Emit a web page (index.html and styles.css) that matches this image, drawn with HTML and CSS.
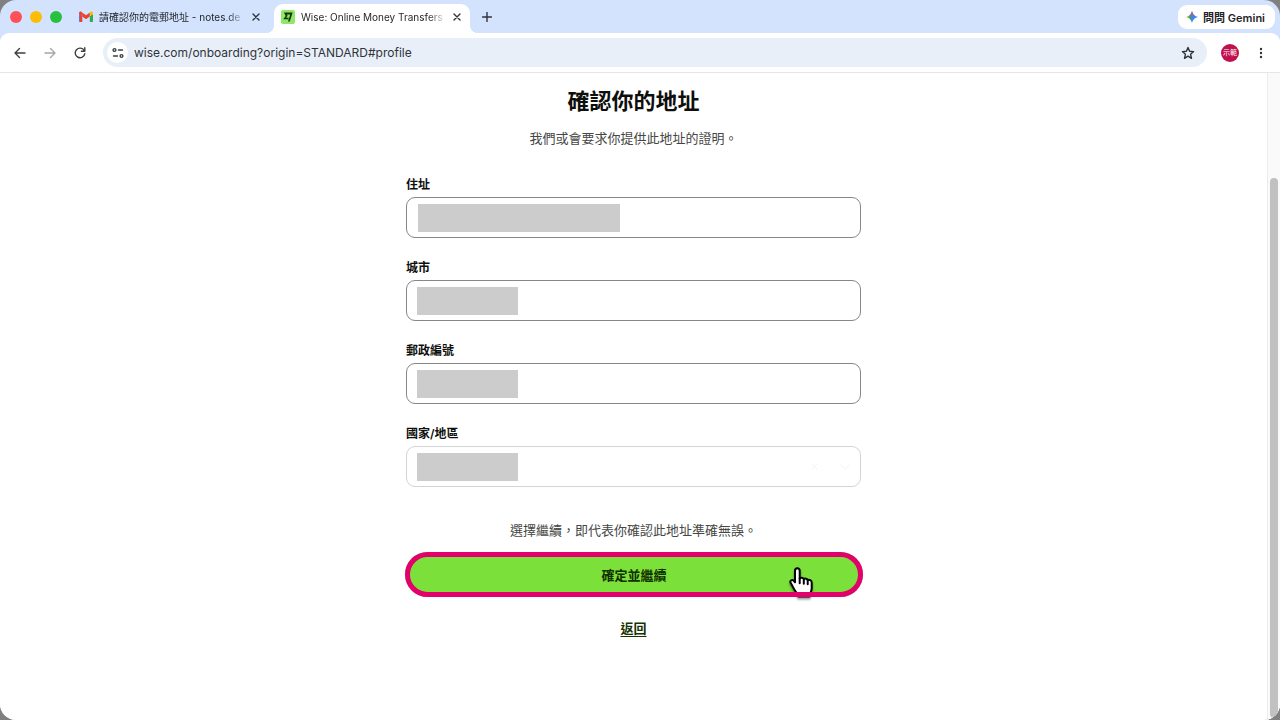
FILE: index.html
```html
<!DOCTYPE html>
<html lang="zh-Hant">
<head>
  <meta charset="UTF-8">
  <title>Wise: Online Money Transfers</title>
  <link rel="stylesheet" href="styles.css">
</head>
<body>

  <div class="window">

    <!-- Tab strip -->
    <div class="tab-strip">
      <div class="lights">
        <span class="light red"></span>
        <span class="light yellow"></span>
        <span class="light green"></span>
      </div>

      <div class="tab">
        <svg class="favicon" viewBox="0 0 14 14">
          <path fill="#4285f4" d="M0 4v7.2c0 .5.400.8.800.8h2.400V6.200z"/>
          <path fill="#34a853" d="M10.800 12h2.400c.500 0 .800-.300.800-.800V4l-3.200 2.200z"/>
          <path fill="#fbbc04" d="M10.800 3v3.300L14 4V3c0-1.400-1.500-2-2.400-1.200z"/>
          <path fill="#ea4335" d="M3.200 6.400V2.400L7 5.300l3.800-2.900v4L7 9.300z"/>
          <path fill="#ea4335" d="M0 3v1l3.200 2.400V12H.8L.8 5z"/>
          <path fill="#ea4335" d="M0 3v1l3.200 2.400v-4l-.8-.6C1.400 1 0 1.700 0 3z"/>
        </svg>
        <span class="tab-title">請確認你的電郵地址 - notes.de</span>
        <button class="icon-btn" aria-label="Close tab">
          <svg width="8" height="8" viewBox="0 0 8 8"><path d="M1 1l6 6M7 1L1 7"/></svg>
        </button>
      </div>

      <div class="tab active">
        <svg class="favicon" viewBox="0 0 14 14">
          <rect width="14" height="14" rx="2" fill="#8ee66b"/>
          <path fill="#163300" d="M3 2.600h8.600L8.800 11.600H7l2.200-7.200H5.900l.7 1.400-1.500 1.900h2.700l-.5 1.500H2.300l2.400-3.200z"/>
        </svg>
        <span class="tab-title">Wise: Online Money Transfers</span>
        <button class="icon-btn" aria-label="Close tab">
          <svg width="8" height="8" viewBox="0 0 8 8"><path d="M1 1l6 6M7 1L1 7"/></svg>
        </button>
      </div>

      <button class="icon-btn new-tab" aria-label="New tab">
        <svg width="10" height="10" viewBox="0 0 10 10"><path d="M5 .5v9M.5 5h9"/></svg>
      </button>

      <button class="gemini">
        <svg width="12" height="12" viewBox="0 0 12 12">
          <defs>
            <linearGradient id="spark" x1="0" y1="0.600" x2="1" y2="0.400">
              <stop offset="0" stop-color="#f5b400"/>
              <stop offset="0.350" stop-color="#34a06a"/>
              <stop offset="0.500" stop-color="#3f86f0"/>
              <stop offset="1" stop-color="#3c7df0"/>
            </linearGradient>
            <linearGradient id="sparkTop" x1="0" y1="0" x2="0" y2="1">
              <stop offset="0" stop-color="#ea4335"/>
              <stop offset="0.450" stop-color="#ea4335" stop-opacity="0"/>
            </linearGradient>
          </defs>
          <path fill="url(#spark)" d="M6 0c.8 3.200 2.800 5.200 6 6-3.200.8-5.200 2.800-6 6-.8-3.200-2.800-5.200-6-6 3.200-.8 5.200-2.800 6-6z"/>
          <path fill="url(#sparkTop)" d="M6 0c.8 3.200 2.800 5.200 6 6-3.200.8-5.200 2.800-6 6-.8-3.200-2.800-5.200-6-6 3.200-.8 5.200-2.800 6-6z"/>
        </svg>
        問問 Gemini
      </button>
    </div>

    <!-- Toolbar -->
    <div class="toolbar">
      <button class="nav-btn" aria-label="Back">
        <svg width="12" height="12" viewBox="0 0 12 12"><path d="M11 6H1M5.500 1.500L1 6l4.500 4.500"/></svg>
      </button>
      <button class="nav-btn faded" aria-label="Forward">
        <svg width="12" height="12" viewBox="0 0 12 12"><path d="M1 6H11M6.500 1.500L11 6l-4.500 4.500"/></svg>
      </button>
      <button class="nav-btn" aria-label="Reload">
        <svg width="12" height="12" viewBox="0 0 12 12"><path d="M10.200 3.500A4.800 4.800 0 1 0 10.800 6.600M10.800.8v3.400H7.400"/></svg>
      </button>

      <div class="address-bar">
        <span class="site-info">
          <svg width="12" height="12" viewBox="0 0 12 12">
            <circle cx="2.500" cy="3" r="1.400"/><path d="M6.500 3h4M1.500 9h4"/><circle cx="9.500" cy="9" r="1.400"/>
          </svg>
        </span>
        <input class="url" type="text" aria-label="Address" value="wise.com/onboarding?origin=STANDARD#profile">
        <button class="icon-btn" aria-label="Bookmark">
          <svg width="14" height="14" viewBox="0 0 14 14"><path d="M7 1.500l1.600 3.700 4 .4-3 2.700.9 4L7 10.200l-3.500 2.100.9-4-3-2.700 4-.4z"/></svg>
        </button>
      </div>

      <span class="avatar">示範</span>
      <button class="icon-btn menu" aria-label="Menu">
        <svg width="4" height="12" viewBox="0 0 4 12"><circle cx="2" cy="2" r="1.200"/><circle cx="2" cy="6" r="1.200"/><circle cx="2" cy="10" r="1.200"/></svg>
      </button>
    </div>

    <!-- Page -->
    <div class="viewport">
      <main class="page">
        <form class="address-form">
          <h1>確認你的地址</h1>
          <p class="intro">我們或會要求你提供此地址的證明。</p>

          <div class="field">
            <label for="address">住址</label>
            <div class="control">
              <span class="mask wide"></span>
              <input id="address" type="text">
            </div>
          </div>

          <div class="field">
            <label for="city">城市</label>
            <div class="control">
              <span class="mask"></span>
              <input id="city" type="text">
            </div>
          </div>

          <div class="field">
            <label for="postcode">郵政編號</label>
            <div class="control">
              <span class="mask"></span>
              <input id="postcode" type="text">
            </div>
          </div>

          <div class="field">
            <label for="country">國家/地區</label>
            <div class="control disabled">
              <span class="mask"></span>
              <select id="country" disabled></select>
              <svg width="40" height="8" viewBox="0 0 40 8"><path d="M2 1l5 5M7 1L2 6M31 2l4 4 4-4"/></svg>
            </div>
          </div>

          <p class="notice">選擇繼續，即代表你確認此地址準確無誤。</p>

          <div class="confirm">
            <button type="button" class="confirm-btn">確定並繼續</button>
            <svg class="pointer" width="28" height="36" viewBox="0 0 28 36">
              <path d="M9.300 3.200c1.500 0 2.400 1 2.400 2.500v8c.6-1.500 3.700-1.300 4.100.5 1-1.100 3.600-.6 3.900 1 1.300-.8 4 0 4 2.400v5.700c0 3-1.700 4.500-2 8.200H10.200c-.6-3-2.400-4.300-3.900-6.900-1.300-2.300-2.300-4.600-3.600-6.600-1.300-2.100 1.300-3.900 3-2.300l1.300 1.600V5.700c0-1.500.8-2.500 2.300-2.500z"/>
              <path class="knuckles" d="M11.700 13.500v4.800M15.800 14.500v4.300M19.700 15.500v3.800"/>
            </svg>
          </div>

          <a class="back" href="#">返回</a>
        </form>
      </main>
      <div class="scrollbar"><div class="thumb"></div></div>
    </div>

  </div>

</body>
</html>
```
FILE: styles.css
```css
* {
  box-sizing: border-box;
}

body {
  margin: 0;
  height: 100vh;
  background: #808080;
  font-family: Inter, 'Noto Sans CJK TC', sans-serif;
  color: #0e0f0c;
  overflow: hidden;
}

button {
  font-family: inherit;
  border: none;
  background: none;
  padding: 0;
}

svg {
  display: block;
  fill: none;
  stroke-linecap: round;
  stroke-linejoin: round;
}

.window {
  height: 100vh;
  display: flex;
  flex-direction: column;
  background: #d3e3fd;
  border-radius: 16px;
  overflow: hidden;
}

/* Tab strip */
.tab-strip {
  display: flex;
  height: 33px;
  padding-right: 5px;
}

.lights {
  display: flex;
  align-items: center;
  gap: 8px;
  padding: 0 8px 0 10px;
}

.light {
  width: 12px;
  height: 12px;
  border-radius: 50%;
}

.red { background: #ff4f57; }
.yellow { background: #fdbc08; }
.green { background: #27c03f; }

.tab {
  display: flex;
  align-items: center;
  gap: 6px;
  width: 196px;
  padding: 0 5px 0 9px;
  font-size: 10px;
  color: #1f2227;
}

.tab.active {
  position: relative;
  align-self: flex-end;
  height: 29px;
  padding: 0 8px 4px 7px;
  margin-left: 8px;
  background: #fff;
  border-radius: 9px 9px 0 0;
}

.tab.active::before,
.tab.active::after {
  content: "";
  position: absolute;
  bottom: 0;
  width: 8px;
  height: 8px;
}

.tab.active::before {
  right: 100%;
  background: radial-gradient(circle at 0 0, transparent 8px, #fff 8px);
}

.tab.active::after {
  left: 100%;
  background: radial-gradient(circle at 100% 0, transparent 8px, #fff 8px);
}

.favicon {
  width: 14px;
  height: 14px;
  flex: none;
}

.tab-title {
  flex: 1;
  overflow: hidden;
  white-space: nowrap;
  -webkit-mask-image: linear-gradient(to right, #000 88%, transparent);
  mask-image: linear-gradient(to right, #000 88%, transparent);
}

.icon-btn svg {
  stroke: #30343a;
  stroke-width: 1.4;
}

.tab .icon-btn {
  padding: 0 1px;
}

.new-tab {
  padding: 0 12px;
}

.gemini {
  display: flex;
  align-items: center;
  align-self: center;
  gap: 5px;
  height: 24px;
  margin-left: auto;
  padding: 0 10px 0 8px;
  background: #fff;
  border-radius: 9px;
  font-size: 11px;
  font-weight: 600;
  color: #1f2227;
}

/* Toolbar */
.toolbar {
  display: flex;
  align-items: center;
  height: 40px;
  padding: 0 17px 0 13px;
  background: #fff;
  border-bottom: 1px solid #e4e6ea;
  border-radius: 9px 9px 0 0;
}

.nav-btn {
  padding: 0 1px;
  margin-right: 16px;
}

.nav-btn svg {
  stroke: #3c4043;
  stroke-width: 1.4;
}

.nav-btn.faded svg {
  stroke: #a4a7ab;
}

.address-bar {
  flex: 1;
  display: flex;
  align-items: center;
  height: 29px;
  padding: 0 12px 0 4px;
  background: #e9eff8;
  border-radius: 15px;
}

.site-info {
  display: flex;
  align-items: center;
  justify-content: center;
  width: 21px;
  height: 21px;
  margin-right: 6px;
  background: #fff;
  border-radius: 50%;
}

.site-info svg {
  stroke: #3c4043;
  stroke-width: 1.4;
}

.url {
  flex: 1;
  padding: 0;
  border: none;
  outline: none;
  background: none;
  font-family: inherit;
  font-size: 12px;
  color: #30343a;
}

.avatar {
  width: 18px;
  height: 18px;
  margin: 0 20px 0 14px;
  border-radius: 50%;
  background: #c2104f;
  color: #fff;
  font-size: 7px;
  line-height: 18px;
  text-align: center;
}

.menu svg {
  fill: #30343a;
  stroke: none;
}

/* Page */
.viewport {
  flex: 1;
  display: flex;
  min-height: 0;
  background: #fff;
}

.page {
  flex: 1;
  padding: 13px 16px 0;
}

.address-form {
  max-width: 455px;
  margin: 0 auto;
  text-align: center;
}

h1 {
  margin: 0 0 12px;
  font-size: 22px;
  line-height: 30px;
}

.intro,
.notice {
  margin: 0;
  font-size: 13px;
  line-height: 20px;
  color: #454745;
}

.intro {
  margin-bottom: 28px;
}

.notice {
  margin: 33px 0 12px;
}

.field {
  text-align: left;
}

.field + .field {
  margin-top: 21px;
}

.field label {
  display: block;
  margin-bottom: 3px;
  font-size: 12px;
  font-weight: 600;
  line-height: 18px;
}

.control {
  display: flex;
  align-items: center;
  height: 41px;
  padding: 0 10px;
  border: 1px solid #868886;
  border-radius: 9px;
}

.control.disabled {
  border-color: #d3d4d3;
}

.control input,
.control select {
  flex: 1;
  min-width: 0;
  height: 28px;
  padding: 0;
  border: none;
  outline: none;
  background: none;
  appearance: none;
}

.control svg {
  stroke: #f3f3f3;
}

.mask {
  width: 101px;
  height: 28px;
  background: #ccc;
}

.mask.wide {
  width: 202px;
  margin-left: 1px;
}

/* Confirm button with highlight ring drawn over the pointer */
.confirm {
  position: relative;
  margin: 0 -2px 20px -1px;
}

.confirm::after {
  content: "";
  position: absolute;
  inset: 0;
  border: 5px solid #e3006d;
  border-radius: 23px;
  pointer-events: none;
}

.confirm-btn {
  display: block;
  width: 100%;
  height: 45px;
  border-radius: 23px;
  background: #7ce03a;
  color: #123000;
  font-size: 13px;
  font-weight: 600;
}

.pointer {
  position: absolute;
  top: 13px;
  right: 47px;
  fill: #fff;
  stroke: #000;
  stroke-width: 2;
  filter: drop-shadow(0 2px 1px rgba(0, 0, 0, 0.4));
}

.knuckles {
  fill: none;
}

.back {
  font-size: 13px;
  font-weight: 600;
  line-height: 20px;
  color: #163300;
  text-underline-offset: 3px;
}

.scrollbar {
  width: 13px;
  padding: 105px 2px 2px;
  background: #fafafa;
  border-left: 1px solid #ececec;
}

.thumb {
  width: 8px;
  height: 100%;
  margin: 0 auto;
  border-radius: 4px;
  background: #c1c1c1;
}
```
